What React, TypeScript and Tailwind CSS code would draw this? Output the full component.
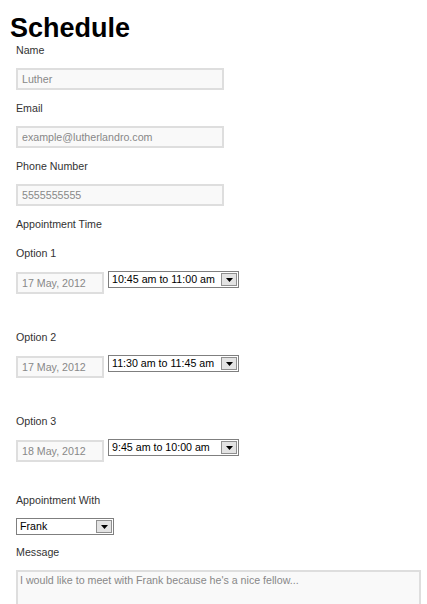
import React from 'react';

// Faux classic selects so the little grey arrow box can be drawn exactly
const FakeSelect = ({ value, width }: { value: string; width: string }) => (
  <div
    className={`${width} flex h-[17px] items-center justify-between border border-[#7f7f7f] bg-white pl-[3px] pr-[1px] text-black`}
  >
    <span className="leading-[15px]">{value}</span>
    <span className="flex h-[13px] w-[16px] items-center justify-center border border-[#8f8f8f] bg-[#e3e3e3]">
      <svg width="7" height="4" viewBox="0 0 7 4">
        <polygon points="0,0 7,0 3.5,4" fill="#000" />
      </svg>
    </span>
  </div>
);

const Label = ({ children }: { children: React.ReactNode }) => (
  <div className="h-[14px] leading-[14px]">{children}</div>
);

const TextInput = ({ value, width }: { value: string; width: string }) => (
  <div
    className={`${width} flex h-[22px] items-center border-2 border-[#dedede] bg-[#f9f9f9] px-[4px] text-[#888]`}
  >
    {value}
  </div>
);

const options = [
  { label: 'Option 1', date: '17 May, 2012', time: '10:45 am to 11:00 am' },
  { label: 'Option 2', date: '17 May, 2012', time: '11:30 am to 11:45 am' },
  { label: 'Option 3', date: '18 May, 2012', time: '9:45 am to 10:00 am' },
];

const App = () => {
  return (
    <div className="h-screen overflow-hidden bg-white font-['Liberation_Sans',Arial,sans-serif] text-[10.67px] text-[#333]">
      <h1 className="pl-[10px] pt-[14px] text-[27px] font-bold leading-[28px] text-black">
        Schedule
      </h1>

      <form className="pl-4 pt-px">
        {/* --- basic fields --- */}
        {[
          { label: 'Name', value: 'Luther' },
          { label: 'Email', value: 'example@lutherlandro.com' },
          { label: 'Phone Number', value: '5555555555' },
        ].map((f) => (
          <div key={f.label} className="mb-[11px]">
            <Label>{f.label}</Label>
            <div className="mt-[11px]">
              <TextInput value={f.value} width="w-[208px]" />
            </div>
          </div>
        ))}

        <div className="mb-[15px]">
          <Label>Appointment Time</Label>
        </div>

        {/* --- time options --- */}
        {options.map((o, i) => (
          <div key={o.label} className={i < 2 ? 'mb-[36px]' : 'mb-[31px]'}>
            <Label>{o.label}</Label>
            <div className="mt-[11px] flex items-start gap-[4px]">
              <div className="mt-px">
                <TextInput value={o.date} width="w-[88px]" />
              </div>
              <FakeSelect value={o.time} width="w-[131px]" />
            </div>
          </div>
        ))}

        <div className="mb-[10px]">
          <Label>Appointment With</Label>
          <div className="mt-[11px]">
            <FakeSelect value="Frank" width="w-[98px]" />
          </div>
        </div>

        <div>
          <Label>Message</Label>
          <div className="mt-[11px] h-[70px] w-[405px] border-2 border-[#dedede] bg-[#f9f9f9] px-[2px] pt-[1px] leading-[14px] text-[#888]">
            I would like to meet with Frank because he's a nice fellow...
          </div>
        </div>
      </form>
    </div>
  );
};

export default App;
